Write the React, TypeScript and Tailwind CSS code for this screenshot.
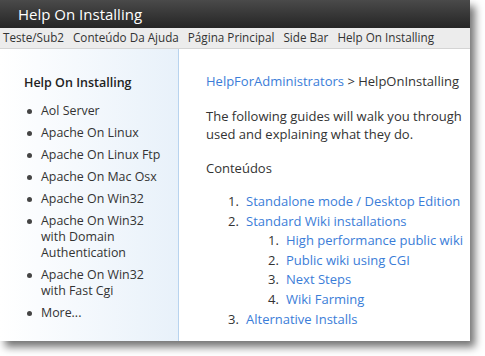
const sideLinks = [
  ["Aol Server"],
  ["Apache On Linux"],
  ["Apache On Linux Ftp"],
  ["Apache On Mac Osx"],
  ["Apache On Win32"],
  ["Apache On Win32", "with Domain", "Authentication"],
  ["Apache On Win32", "with Fast Cgi"],
  ["More..."],
];

const navLinks = ["Teste/Sub2", "Conteúdo Da Ajuda", "Página Principal", "Side Bar", "Help On Installing"];

export default function App() {
  return (
    <div className="w-[485px] h-[356px] bg-white overflow-hidden" style={{ fontFamily: '"Open Sans", "Noto Sans", sans-serif' }}>
      <div className="w-[470px] h-[341px] bg-white flex flex-col shadow-[5px_6px_8px_rgba(0,0,0,0.55)]">
        {/* title bar */}
        <div className="h-[28px] bg-gradient-to-b from-[#4a4a4a] to-[#262626] flex items-center pl-[18px] text-white text-[15px]">
          Help On Installing
        </div>
        {/* nav */}
        <div className="h-[21px] bg-[#ececec] border-b border-[#d4d4d4] flex items-center gap-[9px] pl-[3px] text-[11.7px] text-[#333]">
          {navLinks.map((n) => (
            <span key={n}>{n}</span>
          ))}
        </div>
        <div className="flex flex-1 min-h-0">
          {/* sidebar */}
          <div className="w-[179px] shrink-0 border-r border-[#b8d3ee] bg-gradient-to-r from-white to-[#e8f1fa] pl-[24px] pt-[25px]">
            <div className="text-[12.5px] font-semibold text-[#222] mb-[10px]">Help On Installing</div>
            <ul className="text-[12.4px] text-[#333] whitespace-nowrap">
              {sideLinks.map((l) => (
                <li key={l.join(" ")} className="flex leading-[16px] mb-[6px]">
                  <span className="w-[17px] shrink-0 pl-[3px] pt-[6px]">
                    <span className="block w-[5px] h-[5px] rounded-full bg-[#444]" />
                  </span>
                  <span>
                    {l.map((t) => (
                      <span key={t} className="block">
                        {t}
                      </span>
                    ))}
                  </span>
                </li>
              ))}
            </ul>
          </div>
          {/* main */}
          <div className="flex-1 pl-[27px] pt-[23px] text-[13px] text-[#333] whitespace-nowrap overflow-hidden">
            <div className="leading-[18px]">
              <span className="text-[#3b7dd8]">HelpForAdministrators</span> &gt; HelpOnInstalling
            </div>
            <p className="mt-[17px] leading-[18px]">
              The following guides will walk you through
              <br />
              used and explaining what they do.
            </p>
            <p className="mt-[16px] leading-[18px]">Conteúdos</p>
            <ol className="mt-[15px] pl-[22px] leading-[19.6px]">
              <li className="flex">
                <span className="w-[18px]">1.</span>
                <span className="text-[#3b7dd8]">Standalone mode / Desktop Edition</span>
              </li>
              <li className="flex">
                <span className="w-[18px]">2.</span>
                <span className="text-[#3b7dd8]">Standard Wiki installations</span>
              </li>
              {["High performance public wiki", "Public wiki using CGI", "Next Steps", "Wiki Farming"].map((s, i) => (
                <li key={s} className="flex pl-[40px]">
                  <span className="w-[18px]">{i + 1}.</span>
                  <span className="text-[#3b7dd8]">{s}</span>
                </li>
              ))}
              <li className="flex">
                <span className="w-[18px]">3.</span>
                <span className="text-[#3b7dd8]">Alternative Installs</span>
              </li>
            </ol>
          </div>
        </div>
      </div>
    </div>
  );
}
